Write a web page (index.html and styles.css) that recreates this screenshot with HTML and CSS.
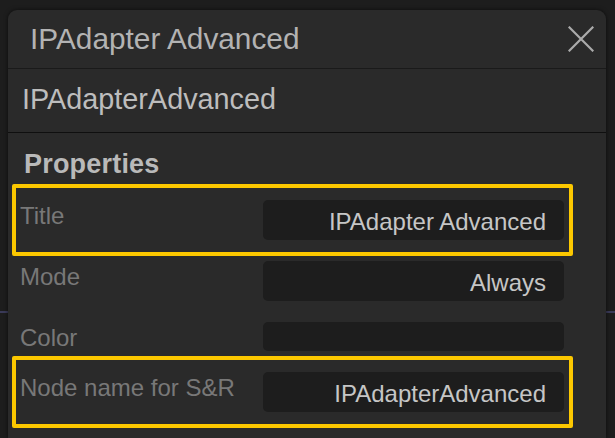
FILE: index.html
```html
<!DOCTYPE html>
<html lang="en">
<head>
<meta charset="utf-8">
<title>IPAdapter Advanced</title>
<link rel="stylesheet" href="styles.css">
</head>
<body>
<div class="canvas">
  <section class="panel">
    <header class="panel-header">
      <h1 class="panel-title">IPAdapter Advanced</h1>
      <button class="close-btn" aria-label="Close">
        <svg width="26" height="26" viewBox="0 0 26 26" fill="none" stroke="currentColor" stroke-width="2.2" stroke-linecap="square">
          <path d="M1.5 1.5 L24.5 24.5 M24.5 1.5 L1.5 24.5"/>
        </svg>
      </button>
    </header>
    <div class="panel-type">IPAdapterAdvanced</div>
    <h2 class="section-title">Properties</h2>
    <div class="props">
      <div class="prop-row highlight">
        <span class="prop-label">Title</span>
        <div class="prop-value">IPAdapter Advanced</div>
      </div>
      <div class="prop-row">
        <span class="prop-label">Mode</span>
        <div class="prop-value">Always</div>
      </div>
      <div class="prop-row">
        <span class="prop-label">Color</span>
        <div class="prop-value empty"></div>
      </div>
      <div class="prop-row highlight">
        <span class="prop-label">Node name for S&amp;R</span>
        <div class="prop-value">IPAdapterAdvanced</div>
      </div>
    </div>
  </section>
</div>
</body>
</html>
```

FILE: styles.css
```css
* { box-sizing: border-box; }

html, body {
  margin: 0;
  padding: 0;
  height: 438px;
  overflow: hidden;
}

body {
  background-color: #1d1d1d;
  background-image:
    linear-gradient(to bottom, transparent 311px, #3a3a58 311px, #3a3a58 313px, transparent 313px);
  font-family: "Liberation Sans", Arial, sans-serif;
}

.canvas {
  padding: 10px 9px 0 8px;
  height: 438px;
}

.panel {
  background: #2a2a2a;
  border-radius: 9px 9px 0 0;
  height: 428px;
  box-shadow: 0 0 4px rgba(0, 0, 0, 0.6);
  overflow: hidden;
}

.panel-header {
  display: flex;
  align-items: center;
  justify-content: space-between;
  height: 59px;
  padding: 0 12px 2px 22px;
  border-bottom: 1px solid #1a1a1a;
}

.panel-title {
  margin: 0;
  font-size: 29.8px;
  font-weight: normal;
  color: #b3b3b3;
  line-height: 33px;
}

.close-btn {
  display: flex;
  padding: 0;
  margin: 0;
  background: none;
  border: 0;
  color: #ababab;
  margin-top: 2px;
}

.panel-type {
  font-size: 28.8px;
  line-height: 32px;
  color: #bdbdbd;
  padding: 14px 14px 17px;
  border-bottom: 1px solid #0f0f0f;
}

.section-title {
  margin: 16px 0 0 16px;
  font-size: 27px;
  line-height: 31px;
  font-weight: bold;
  color: #b9b9b9;
  letter-spacing: 0.2px;
}

.props {
  display: flex;
  flex-direction: column;
  gap: 21px;
  padding: 20px 42px 0 12px;
}

.prop-row {
  position: relative;
  display: flex;
  align-items: flex-start;
}

.prop-row.highlight::after {
  content: "";
  position: absolute;
  top: -16px;
  bottom: -16px;
  left: -8px;
  right: -9px;
  border: 4px solid #fcc800;
  border-radius: 2px;
}

.prop-label {
  width: 243px;
  flex: none;
  font-size: 24px;
  line-height: 26px;
  padding-top: 3px;
  color: #787878;
}

.prop-value {
  flex: 1;
  background: #1d1d1d;
  border-radius: 5px;
  padding: 9px 18px 5px 10px;
  font-size: 24px;
  line-height: 26px;
  color: #c6c6c6;
  text-align: right;
  white-space: nowrap;
}

.prop-value.empty {
  height: 29px;
  padding: 0;
}
```
